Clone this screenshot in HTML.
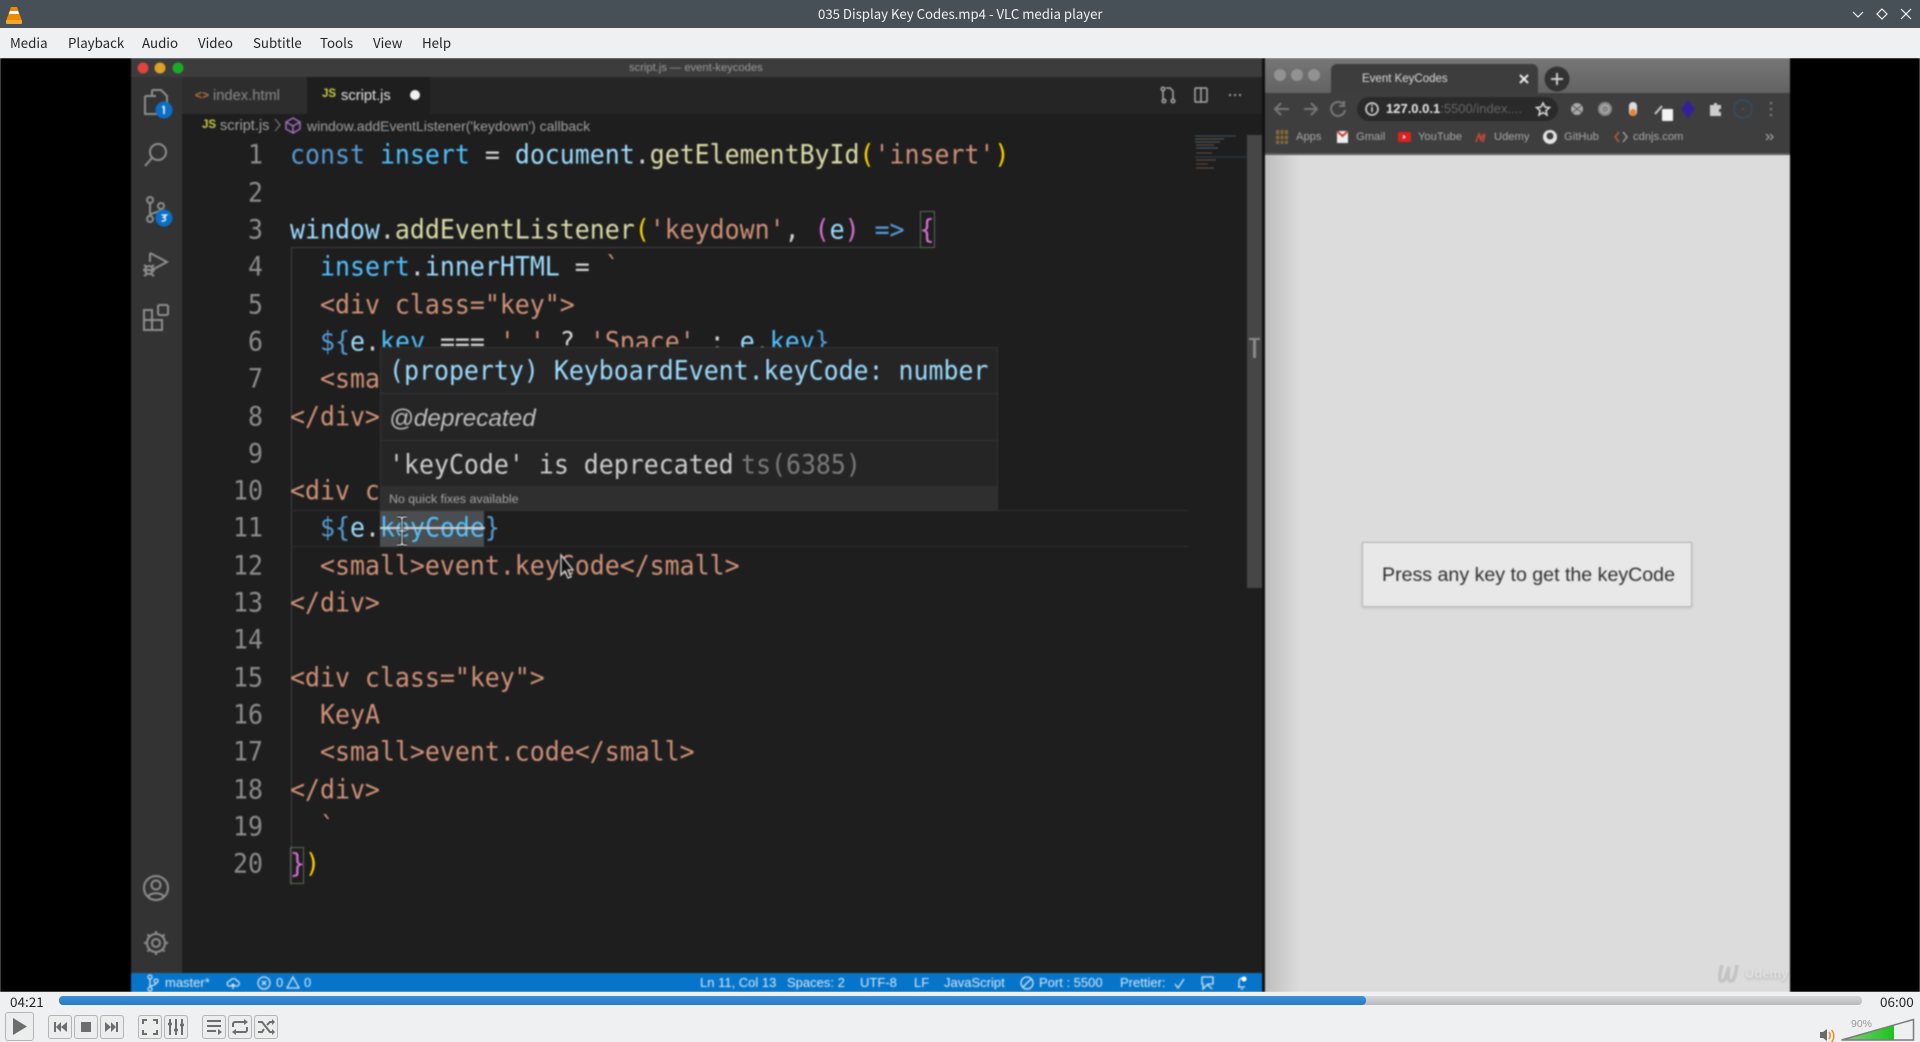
<!DOCTYPE html>
<html><head><meta charset="utf-8"><title>035 Display Key Codes.mp4 - VLC media player</title>
<style>
html,body{margin:0;padding:0;width:1920px;height:1042px;overflow:hidden;background:#eff0f1}
*{box-sizing:border-box}
.a{position:absolute;white-space:pre}
#v{position:absolute;left:0;top:0;width:1920px;height:1042px;filter:blur(.75px);overflow:hidden}
#chrome{position:absolute;left:0;top:0;width:1920px;height:1042px}
.l{position:absolute;white-space:pre;font:24.9px/37.3px "DejaVu Sans Mono","Liberation Mono",monospace;color:#d4d4d4;height:37.3px;transform:scaleY(1.06)}
.n{position:absolute;left:199px;width:64px;text-align:right;white-space:pre;font:24.9px/37.3px "DejaVu Sans Mono",monospace;color:#8c8c8c;transform:scaleY(1.06)}
.b{color:#569cd6}.c{color:#4fc1ff}.v{color:#9cdcfe}.f{color:#dcdcaa}.s{color:#ce9178}.y{color:#ffd700}.p{color:#da70d6}.d{color:#c8c8c8}
.ui{font-family:"Liberation Sans",sans-serif}
.st{position:absolute;top:975px;color:#d5e8f7;font:13px/16px "Liberation Sans",sans-serif;white-space:pre}
.bk{position:absolute;top:130px;color:#a8a8a8;font:11.2px/14px "Liberation Sans",sans-serif;white-space:pre}
.m{position:absolute;top:33px;font:13.3px/20px "Noto Sans CJK SC","Liberation Sans",sans-serif;color:#232629;white-space:pre}
.btn{position:absolute;top:1015px;width:24px;height:24px;border:1px solid #b4b5b7;border-radius:3px;background:#eceded}
.btn svg{position:absolute;left:0;top:0}
</style></head><body>
<div id="v">
  <div class="a" style="left:0;top:58px;width:1920px;height:934px;background:#000"></div>
  <!-- VS Code -->
  <div class="a" style="left:131px;top:58px;width:1131px;height:934px;background:#1e1e1e"></div>
  <div class="a" style="left:131px;top:58px;width:1131px;height:19px;background:#3c3c3c"></div>
  <div class="a" style="left:131px;top:77px;width:51px;height:896px;background:#333"></div>
  <div class="a" style="left:182px;top:77px;width:1080px;height:37px;background:#252526"></div>
  <div class="a" style="left:182px;top:77px;width:125px;height:37px;background:#2d2d2d"></div>
  <div class="a" style="left:307px;top:77px;width:123px;height:37px;background:#1e1e1e"></div>
  <div class="a ui" style="left:629px;top:61px;font-size:11.2px;line-height:14px;color:#9a9a9a">script.js — event-keycodes</div>
  <div class="a ui" style="left:213px;top:87px;font-size:14.7px;line-height:18px;color:#8b8b8b">index.html</div>
  <div class="a ui" style="left:195px;top:88px;font-size:12px;line-height:14px;color:#b5743a;font-weight:bold">&lt;&gt;</div>
  <div class="a ui" style="left:322px;top:87px;font-size:11.5px;line-height:14px;color:#cbcb41;font-weight:bold">JS</div>
  <div class="a ui" style="left:341px;top:87px;font-size:14.7px;line-height:18px;color:#e4e4e4">script.js</div>
  <div class="a" style="left:410px;top:90px;width:10px;height:10px;border-radius:5px;background:#f0f0f0"></div>
  <div class="a ui" style="left:202px;top:118px;font-size:11.5px;line-height:14px;color:#cbcb41;font-weight:bold">JS</div>
  <div class="a ui" style="left:220px;top:118px;font-size:14.6px;line-height:17px;color:#a0a0a0">script.js</div>
  <div class="a ui" style="left:307px;top:118px;font-size:14px;line-height:17px;color:#a0a0a0">window.addEventListener('keydown') callback</div>

  <!-- guides -->
  <div class="a" style="left:291px;top:247px;width:629px;height:1px;background:#454045"></div>
  <div class="a" style="left:291px;top:247px;width:1px;height:638px;background:#404040"></div>
  <div class="a" style="left:920px;top:211px;width:15px;height:37px;border:1px solid #5a6a5a"></div>
  <div class="a" style="left:290px;top:847px;width:14px;height:37px;border:1px solid #5a6a5a"></div>
  <!-- current line -->
  <div class="a" style="left:291px;top:510px;width:897px;height:37px;border-top:1px solid #2e2e2e;border-bottom:1px solid #2e2e2e"></div>
  <div class="a" style="left:380px;top:510px;width:104px;height:37px;background:#4a4e50"></div>

  <div class="a" style="left:0;top:1px;width:1920px;height:1000px">
  <!-- line numbers -->
  <div class="n" style="top:135.4px">1</div><div class="n" style="top:172.7px">2</div><div class="n" style="top:210px">3</div><div class="n" style="top:247.3px">4</div><div class="n" style="top:284.6px">5</div><div class="n" style="top:321.9px">6</div><div class="n" style="top:359.2px">7</div><div class="n" style="top:396.5px">8</div><div class="n" style="top:433.8px">9</div><div class="n" style="top:471.1px">10</div><div class="n" style="top:508.4px">11</div><div class="n" style="top:545.7px">12</div><div class="n" style="top:583px">13</div><div class="n" style="top:620.3px">14</div><div class="n" style="top:657.6px">15</div><div class="n" style="top:694.9px">16</div><div class="n" style="top:732.2px">17</div><div class="n" style="top:769.5px">18</div><div class="n" style="top:806.8px">19</div><div class="n" style="top:844.1px">20</div>

  <!-- code -->
  <div class="l" style="left:290px;top:135.4px"><span class="b">const</span> <span class="c">insert</span> = <span class="v">document</span>.<span class="f">getElementById</span><span class="y">(</span><span class="s">'insert'</span><span class="y">)</span></div>
  <div class="l" style="left:290px;top:210px"><span class="v">window</span>.<span class="f">addEventListener</span><span class="y">(</span><span class="s">'keydown'</span>, <span class="p">(</span><span class="v">e</span><span class="p">)</span> <span class="b">=&gt;</span> <span class="p">{</span></div>
  <div class="l" style="left:320px;top:247.3px"><span class="c">insert</span>.<span class="v">innerHTML</span> = <span class="s">`</span></div>
  <div class="l s" style="left:320px;top:284.6px">&lt;div class="key"&gt;</div>
  <div class="l" style="left:320px;top:321.9px"><span class="b">${</span><span class="v">e</span>.<span class="c">key</span> === <span class="s">' '</span> ? <span class="s">'Space'</span> : <span class="v">e</span>.<span class="c">key</span><span class="b">}</span></div>
  <div class="l s" style="left:320px;top:359.2px">&lt;small&gt;</div>
  <div class="l s" style="left:290px;top:396.5px">&lt;/div&gt;</div>
  <div class="l s" style="left:290px;top:471.1px">&lt;div class="key"&gt;</div>
  <div class="l" style="left:320px;top:508.4px"><span class="b">${</span><span class="v">e</span>.<span class="c" style="text-decoration:line-through;text-decoration-color:#d0d0d0">keyCode</span><span class="b">}</span></div>
  <div class="l s" style="left:320px;top:545.7px">&lt;small&gt;event.keyCode&lt;/small&gt;</div>
  <div class="l s" style="left:290px;top:583px">&lt;/div&gt;</div>
  <div class="l s" style="left:290px;top:657.6px">&lt;div class="key"&gt;</div>
  <div class="l s" style="left:320px;top:694.9px">KeyA</div>
  <div class="l s" style="left:320px;top:732.2px">&lt;small&gt;event.code&lt;/small&gt;</div>
  <div class="l s" style="left:290px;top:769.5px">&lt;/div&gt;</div>
  <div class="l s" style="left:320px;top:806.8px">`</div>
  <div class="l" style="left:290px;top:844.1px"><span class="p">}</span><span class="y">)</span></div>
  </div>

  <!-- scrollbar and minimap -->
  <div class="a" style="left:1247px;top:135px;width:15px;height:453px;background:#464646"></div>
  <svg class="a" style="left:1190px;top:130px;opacity:.6" width="60" height="50"><g stroke-width=".9" fill="none"><path d="M5 6H46" stroke="#5a7a9a"/><path d="M5 9H34" stroke="#9a8a6a"/><path d="M5 12H30" stroke="#6a90b0"/><path d="M6 15H24" stroke="#a07a60"/><path d="M6 18H28" stroke="#6a90b0"/><path d="M6 23H22" stroke="#a07a60"/><path d="M5 27H57" stroke="#355a7a"/><path d="M6 30H26" stroke="#a07a60"/><path d="M6 34H18" stroke="#a07a60"/><path d="M6 38H24" stroke="#a07a60"/></g></svg>
  <path></path>
  <div class="a" style="left:1249px;top:338px;width:11px;height:2px;background:#8a8a8a"></div>
  <div class="a" style="left:1253px;top:338px;width:3px;height:20px;background:#8a8a8a"></div>

  <!-- hover -->
  <div class="a" style="left:380px;top:347px;width:618px;height:164px;background:#252526;border:1px solid #333"></div>
  <div class="a" style="left:380px;top:393px;width:618px;height:1px;background:#343434"></div>
  <div class="a" style="left:380px;top:440px;width:618px;height:1px;background:#343434"></div>
  <div class="a" style="left:381px;top:486px;width:616px;height:24px;background:#2f2f30"></div>
  <div class="l" style="left:389px;top:351.5px;color:#9cdcfe">(property) KeyboardEvent.keyCode: number</div>
  <div class="a ui" style="left:389px;top:405px;font-size:24.4px;line-height:28px;font-style:italic;color:#bdbdbd">@deprecated</div>
  <div class="l" style="left:389px;top:445.5px;color:#cccccc">'keyCode' is deprecated</div>
  <div class="l" style="left:741px;top:445.5px;color:#7a7a7a">ts(6385)</div>
  <div class="a ui" style="left:389px;top:492px;font-size:12.4px;line-height:14px;color:#a6a6a6">No quick fixes available</div>

  <!-- activity + misc icons -->
  <svg class="a" style="left:0;top:0" width="1920" height="1042" fill="none">
    <circle cx="143" cy="68" r="5.5" fill="#e0443e"/><circle cx="160" cy="68" r="5.5" fill="#dea123"/><circle cx="178" cy="68" r="5.5" fill="#1aab29"/>
    <g stroke="#8e8e8e" stroke-width="2">
      <path d="M152 90h9l6 6v14h-3M152 90v5"/>
      <path d="M145 96h11M145 96v18h13v-2"/>
      <circle cx="158" cy="152" r="8"/><path d="M152 158l-7 8"/>
      <circle cx="150" cy="200" r="3"/><circle cx="150" cy="219" r="3"/><circle cx="161" cy="206" r="3"/><path d="M150 203v13M161 209c0 4-11 3-11 7"/>
      <path d="M150 253l17 9-17 9M150 253v9"/><circle cx="149" cy="270" r="4"/><path d="M143 270h12M144 265l3 2M154 265l-3 2M144 276l3-2M154 276l-3-2"/>
      <path d="M144 310h8v20h-8zM144 320h18v10h-10"/><rect x="158" y="305" width="10" height="10" rx="1.5"/>
      <circle cx="156" cy="888" r="12"/><circle cx="156" cy="885" r="4.5"/><path d="M148 897c2-5 14-5 16 0"/>
      <circle cx="156" cy="943" r="4"/><path d="M156 931v3M156 952v3M144 943h3M165 943h3M147.5 934.5l2.5 2.5M162 949l2.5 2.5M147.500 951.500l2.500-2.500M162 937l2.500-2.500"/><circle cx="156" cy="943" r="9"/>
    </g>
    <circle cx="164" cy="110" r="8.500" fill="#0a6fc8"/><circle cx="164" cy="218" r="8.500" fill="#0a6fc8"/>
    <path d="M164 106v8M162.500 107.500l1.500-1.500" stroke="#fff" stroke-width="1.500"/>
    <path d="M161.500 215h5l-3 2.500c3 0 3 4-2 3.500" stroke="#fff" stroke-width="1.300"/>
    <path d="M293 118l7 4v7l-7 4-7-4v-7zM286 122l7 4 7-4M293 126v7" stroke="#a06fc0" stroke-width="1.500"/>
    <path d="M275 119l5 6-5 6" stroke="#777" stroke-width="1.200"/>
    <g stroke="#a8a8a8" stroke-width="1.500">
      <circle cx="1163" cy="89" r="1.800"/><circle cx="1173" cy="101" r="1.800"/><circle cx="1164" cy="101" r="1.800"/><path d="M1163 91v8M1166 88h4l3 3v8"/>
      <rect x="1195" y="88" width="12" height="14" rx="1"/><path d="M1201 88v14"/>
    </g>
    <g fill="#a8a8a8"><circle cx="1230" cy="95" r="1.100"/><circle cx="1235" cy="95" r="1.100"/><circle cx="1240" cy="95" r="1.100"/></g>
    <!-- cursors -->
    <path d="M397 517h4l1 2 1-2h4M402 519v24M397 545h4l1-2 1 2h4M398 531h8" stroke="#000" stroke-width="3"/>
    <path d="M397 517h4l1 2 1-2h4M402 519v24M397 545h4l1-2 1 2h4M398 531h8" stroke="#eee" stroke-width="1.300"/>
    <path d="M561 555v20l4-4 3 7 3-1-3-7h5z" fill="#111" stroke="#ddd" stroke-width="1.300"/>
  </svg>

  <!-- status bar -->
  <div class="a" style="left:131px;top:973px;width:1131px;height:19px;background:#0675c9"></div>
  <div class="st" style="left:165px">master*</div>
  <div class="st" style="left:276px">0</div>
  <div class="st" style="left:304px">0</div>
  <div class="st" style="left:700px">Ln 11, Col 13</div>
  <div class="st" style="left:787px">Spaces: 2</div>
  <div class="st" style="left:860px">UTF-8</div>
  <div class="st" style="left:914px">LF</div>
  <div class="st" style="left:944px">JavaScript</div>
  <div class="st" style="left:1039px">Port : 5500</div>
  <div class="st" style="left:1120px">Prettier:</div>
  <svg class="a" style="left:0;top:0" width="1920" height="1042" fill="none" stroke="#cfe4f5" stroke-width="1.300">
    <circle cx="150" cy="977" r="2"/><circle cx="150" cy="989" r="2"/><circle cx="156" cy="981" r="2"/><path d="M150 979v8M156 983c0 3-6 2-6 4"/>
    <path d="M229 986h8c3 0 3-5 0-5-1-3-6-3-7 0-3 0-4 5-1 5zM233 989v-5M231 986l2-2 2 2"/>
    <circle cx="264" cy="983" r="6"/><path d="M262 981l4 4M266 981l-4 4"/>
    <path d="M293 977l6 11h-12z"/>
    <circle cx="1027" cy="983" r="6"/><path d="M1023 987l8-8"/>
    <path d="M1175 984l3 4 6-9"/>
    <path d="M1202 977h11v7h-5l-5 5v-5h-1zM1207 984l5 5"/>
    <path d="M1238 987h7M1239 987v-5c0-3 2-4 3-4M1241 989h2"/><circle cx="1244" cy="979" r="2.500" fill="#fff" stroke="none"/>
  </svg>

  <!-- Browser -->
  <div class="a" style="left:1264px;top:58px;width:526px;height:36px;background:linear-gradient(#767676,#626262)"></div>
  <div class="a" style="left:1331px;top:64px;width:207px;height:30px;background:#3d3d3d;border-radius:6px 6px 0 0"></div>
  <div class="a" style="left:1264px;top:93px;width:526px;height:60px;background:#3e3e3e"></div>
  <div class="a" style="left:1264px;top:153px;width:526px;height:2px;background:#5a5a5a"></div>
  <div class="a" style="left:1264px;top:155px;width:526px;height:837px;background:#dcdcdc"></div>
  <div class="a" style="left:1264px;top:155px;width:36px;height:837px;background:linear-gradient(90deg,#bcbcbc,#dcdcdc)"></div>
  <div class="a" style="left:1262px;top:58px;width:3px;height:934px;background:#111"></div>
  <div class="a ui" style="left:1362px;top:72px;font-size:11.5px;line-height:14px;color:#ddd">Event KeyCodes</div>
  <div class="a" style="left:1357px;top:97px;width:201px;height:24px;border-radius:12px;background:#2a2a2a"></div>
  <div class="a ui" style="left:1386px;top:101px;font-size:13px;line-height:16px;color:#666"><b style="color:#e8e8e8">127.0.0.1</b>:5500/index....</div>
  <svg class="a" style="left:0;top:0" width="1920" height="1042" fill="none">
    <circle cx="1280" cy="75" r="6" fill="#929292"/><circle cx="1297" cy="75" r="6" fill="#929292"/><circle cx="1314" cy="75" r="6" fill="#929292"/>
    <path d="M1520 75l8 8M1528 75l-8 8" stroke="#eee" stroke-width="2"/>
    <circle cx="1557" cy="79" r="12.500" fill="#333"/><path d="M1557 73v12M1551 79h12" stroke="#ccc" stroke-width="2"/>
    <g stroke="#777" stroke-width="2"><path d="M1289 109h-13M1281 103l-6 6 6 6"/><path d="M1304 109h13M1311 103l6 6-6 6"/><path d="M1343 104a7 7 0 1 0 2 6M1344 101v5h-5"/></g>
    <circle cx="1372" cy="109" r="6" stroke="#e0e0e0" stroke-width="1.500"/><path d="M1372 107v5M1372 104.500v1.500" stroke="#e0e0e0" stroke-width="1.500"/>
    <path d="M1543 103l2 4 4.500.5-3.500 3 1 4.500-4-2.500-4 2.500 1-4.500-3.500-3 4.500-.5z" stroke="#ddd" stroke-width="1.500"/>
    <circle cx="1577" cy="109" r="6" fill="#aaa"/><path d="M1572 105l10 8M1582 105l-10 8" stroke="#555"/>
    <circle cx="1605" cy="109" r="7" fill="#888"/><circle cx="1605" cy="109" r="4" stroke="#bbb"/>
    <rect x="1629" y="102" width="8" height="14" rx="4" fill="#ddd"/><rect x="1630" y="109" width="6" height="7" rx="3" fill="#e8822e"/>
    <path d="M1655 114l7-8" stroke="#ccc" stroke-width="2"/><rect x="1662" y="109" width="11" height="12" rx="1" fill="#f4f4f4"/>
    <path d="M1688 100l7 9-7 9-7-9z" fill="#34209a"/>
    <path d="M1710 105h4v-2h3v2h4v4h-2v3h2v4h-11z" fill="#ccc"/>
    <circle cx="1743" cy="109" r="9" stroke="#2f5066" stroke-width="1.500"/><circle cx="1743" cy="109" r="1" fill="#556"/>
    <g fill="#777"><circle cx="1771" cy="103" r="1.300"/><circle cx="1771" cy="109" r="1.300"/><circle cx="1771" cy="115" r="1.300"/></g>
    <rect x="1276" y="130" width="12" height="14" fill="#7f6a3a"/><path d="M1280 130v14M1284 130v14M1276 135h12M1276 140h12" stroke="#333"/>
    <rect x="1337" y="131" width="11" height="12" fill="#eee"/><path d="M1337 131l5.500 5 5.500-5" stroke="#c84030" stroke-width="2"/>
    <rect x="1398" y="132" width="13" height="10" rx="2" fill="#e0201a"/><path d="M1403 135l3 2-3 2z" fill="#fff"/>
    <path d="M1476 142l3-8 2 6 2-6M1483 142l2-8" stroke="#c84a3a" stroke-width="1.600"/>
    <circle cx="1550" cy="137" r="7" fill="#e4e4e4"/><circle cx="1550" cy="136" r="3.500" fill="#3e3e3e"/>
    <path d="M1619 132l-4 5 4 5" stroke="#b0603a" stroke-width="1.500"/><path d="M1623 132l4 5-4 5" stroke="#999" stroke-width="1.500"/>
    <path d="M1766 134l3 3-3 3M1770 134l3 3-3 3" stroke="#aaa" stroke-width="1.200"/>
    <path d="M1722 965c-2 7-4 16 0 16 4 0 5-9 7-14-1 7-2 14 2 14s5-10 6-16" stroke="#c4c4c4" stroke-width="3.500"/>
  </svg>
  <div class="bk" style="left:1296px">Apps</div><div class="bk" style="left:1356px">Gmail</div><div class="bk" style="left:1418px">YouTube</div><div class="bk" style="left:1494px">Udemy</div><div class="bk" style="left:1564px">GitHub</div><div class="bk" style="left:1633px">cdnjs.com</div>
  <div class="a" style="left:1362px;top:542px;width:330px;height:65px;background:#e8e8e8;border:1px solid #b4b4b4;box-shadow:0 1px 3px rgba(0,0,0,.12)"></div>
  <div class="a ui" style="left:1382px;top:563px;font-size:19.6px;line-height:24px;color:#2e2e2e">Press any key to get the keyCode</div>
  <div class="a ui" style="left:1745px;top:966px;font-size:13px;line-height:16px;font-weight:bold;color:#e4e4e4;text-shadow:0 1px 2px #aaa">Udemy</div>
</div>

<div id="chrome">
  <div class="a" style="left:0;top:0;width:1920px;height:28px;background:#475057"></div>
  <svg class="a" style="left:0;top:0" width="30" height="28"><path d="M11 7h6l5 14H6z" fill="#f08a00"/><path d="M10 11h8l1 3H9z" fill="#fff"/><rect x="6" y="20" width="16" height="4" rx="1" fill="#f4a52a"/></svg>
  <div class="a" style="left:818px;top:4px;font:13.2px/20px 'Noto Sans CJK SC','Liberation Sans',sans-serif;color:#eff0f1">035 Display Key Codes.mp4 - VLC media player</div>
  <svg class="a" style="left:1840px;top:0" width="80" height="28" fill="none" stroke="#eff0f1" stroke-width="1.200"><path d="M13 12l5 5 5-5"/><path d="M42 9l5 5-5 5-5-5z"/><path d="M61 9l10 10M71 9l-10 10"/></svg>
  <div class="a" style="left:0;top:28px;width:1920px;height:30px;background:#eff0f1"></div>
  <div class="m" style="left:10px">Media</div><div class="m" style="left:68px">Playback</div><div class="m" style="left:142px">Audio</div><div class="m" style="left:198px">Video</div><div class="m" style="left:253px">Subtitle</div><div class="m" style="left:320px">Tools</div><div class="m" style="left:373px">View</div><div class="m" style="left:422px">Help</div>

  <div class="a" style="left:0;top:992px;width:1920px;height:50px;background:#eff0f1"></div>
  <div class="a" style="left:10px;top:993px;font:13.500px/17px 'Noto Sans CJK SC','Liberation Sans',sans-serif;color:#232629">04:21</div>
  <div class="a" style="left:1880px;top:993px;font:13.500px/17px 'Noto Sans CJK SC','Liberation Sans',sans-serif;color:#232629">06:00</div>
  <div class="a" style="left:59px;top:996px;width:1803px;height:9px;border-radius:4px;background:linear-gradient(#d6d7d9,#b8babd)"></div>
  <div class="a" style="left:59px;top:996px;width:1307px;height:9px;border-radius:4px;background:linear-gradient(#3c8fdc,#2a78c4)"></div>

  <div class="btn" style="left:5px;top:1012px;width:29px;height:29px"><svg width="27" height="27"><path d="M7 5l14 8.500-14 8.500z" fill="#6c6d6f"/></svg></div>
  <div class="btn" style="left:48px"><svg width="22" height="22"><path d="M5 6h2v10H5zM12 6v10l-5-5zM18 6v10l-6-5z" fill="#6c6d6f"/></svg></div>
  <div class="btn" style="left:74px"><svg width="22" height="22"><rect x="6" y="6" width="10" height="10" fill="#6c6d6f"/></svg></div>
  <div class="btn" style="left:100px"><svg width="22" height="22"><path d="M15 6h2v10h-2zM10 6v10l5-5zM4 6v10l6-5z" fill="#6c6d6f"/></svg></div>
  <div class="btn" style="left:138px"><svg width="22" height="22" fill="none" stroke="#6c6d6f" stroke-width="2"><path d="M4 8V4h4M14 4h4v4M18 14v4h-4M8 18H4v-4"/></svg></div>
  <div class="btn" style="left:164px"><svg width="22" height="22" fill="none" stroke="#6c6d6f" stroke-width="2"><path d="M5 3v16M11 3v16M17 3v16"/><path d="M3 8h4M9 14h4M15 9h4" stroke-width="2.500"/></svg></div>
  <div class="btn" style="left:202px"><svg width="22" height="22" fill="none" stroke="#6c6d6f" stroke-width="2"><path d="M4 5h14M4 10h14M4 15h9"/><path d="M15 13l4 3-4 3z" fill="#6c6d6f" stroke="none"/></svg></div>
  <div class="btn" style="left:228px"><svg width="22" height="22" fill="none" stroke="#6c6d6f" stroke-width="2"><path d="M4 11V8c0-1 1-2 2-2h11M18 11v3c0 1-1 2-2 2H5"/><path d="M15 3l4 3-4 3zM7 13l-4 3 4 3z" fill="#6c6d6f" stroke="none"/></svg></div>
  <div class="btn" style="left:254px"><svg width="22" height="22" fill="none" stroke="#6c6d6f" stroke-width="2"><path d="M3 6h4l8 10h3M3 16h4l2-3M12 9l3-3h3"/><path d="M17 3l3 3-3 3zM17 13l3 3-3 3z" fill="#6c6d6f" stroke="none"/></svg></div>

  <svg class="a" style="left:1815px;top:1015px" width="105" height="27">
    <path d="M5 17h3l4-3v12l-4-3H5z" fill="#6a6a6a"/>
    <path d="M14 17c1.500 2 1.500 5 0 7M16.500 15c3 3 3 9 0 12" fill="none" stroke="#f08a1e" stroke-width="1.500"/>
    <defs><linearGradient id="g" x1="0" x2="1"><stop offset="0" stop-color="#7fd07f"/><stop offset="1" stop-color="#1cc41c"/></linearGradient></defs>
    <path d="M27 24.500L79 9.500V24.500z" fill="url(#g)"/>
    <path d="M26.500 25L98.500 4.500V25z" fill="none" stroke="#7c7c7c" stroke-width="1.500"/>
  </svg>
  <div class="a ui" style="left:1851px;top:1018px;font-size:10.500px;line-height:12px;color:#9a9b9d">90%</div>
</div>
</body></html>
